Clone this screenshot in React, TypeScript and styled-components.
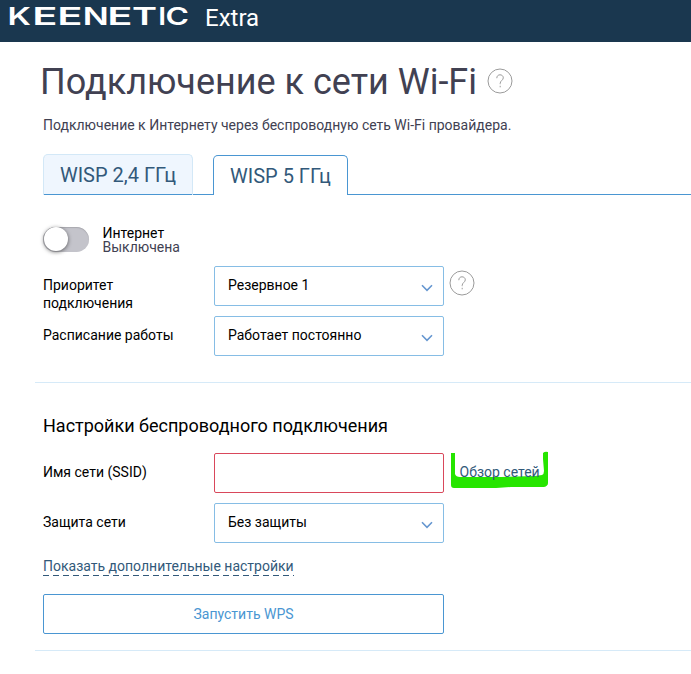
import React from "react";
import styled, { createGlobalStyle } from "styled-components";

const GlobalStyle = createGlobalStyle`
  * { box-sizing: border-box; }
  body { margin: 0; background: #fff; color: #000; overflow: hidden;
    font: 14px/18px Roboto, "Liberation Sans", sans-serif; }
`;

const Page = styled.div`
  width: 691px;
  height: 674px;
  overflow: hidden;
`;
const Header = styled.header`
  display: flex;
  align-items: flex-start;
  height: 42px;
  background: #1a374f;
  color: #fff;
`;
const Logo = styled.svg`
  display: block;
  width: 205px;
  height: 42px;
  flex: none;
  fill: #fff;
  font: 600 24.5px Inter, sans-serif;
`;
const Model = styled.span`
  font-size: 24px;
  line-height: 28px;
  padding-top: 4px;
`;
const Main = styled.main`
  padding-left: 35px;
`;
const TitleRow = styled.div`
  display: flex;
  align-items: center;
  gap: 10px;
  height: 50px;
  margin-top: 14px;
  padding-left: 5px;
`;
const Title = styled.h1`
  margin: 2px 0 0;
  font-size: 36px;
  line-height: 50px;
  font-weight: 400;
  color: #414152;
  white-space: nowrap;
`;
const HelpIcon = styled.svg`
  display: block;
  flex: none;
  width: 26px;
  height: 26px;
`;
const Lead = styled.p`
  margin: 10px 0 20px 8px;
  color: #414152;
`;
const Tabs = styled.nav`
  display: flex;
  align-items: flex-end;
  height: 41px;
  margin-left: 8px;
`;
const Tab = styled.div<{ $active?: boolean }>`
  display: flex;
  justify-content: center;
  width: ${(p) => (p.$active ? 135 : 150)}px;
  height: ${(p) => (p.$active ? 40 : 41)}px;
  padding-top: 8px;
  border: 1px solid ${(p) => (p.$active ? "#4a96d2" : "#d3e8f7")};
  border-bottom: 0;
  border-radius: 5px 5px 0 0;
  background: ${(p) => (p.$active ? "#fff" : "#eff6fe")};
  box-shadow: ${(p) => (p.$active ? "none" : "inset 0 -1px #4a96d2")};
  color: #32597a;
  font-size: 20px;
  line-height: 24px;
`;
const TabLine = styled.div<{ $width?: number }>`
  height: 1px;
  background: #4a96d2;
  ${(p) => (p.$width ? `width: ${p.$width}px;` : "flex: 1;")}
`;
const SwitchRow = styled.div`
  display: flex;
  align-items: center;
  gap: 13.5px;
  height: 30px;
  margin: 30px 0 11px 8px;
`;
const Track = styled.div`
  width: 46px;
  height: 25px;
  margin-top: -1px;
  border-radius: 13px;
  background: #c4c4cb;
  box-shadow: inset 0 1px 1px #aaaab0;
`;
const Knob = styled.div`
  width: 24px;
  height: 24px;
  margin-left: 0.5px;
  border-radius: 50%;
  background: #fff;
  box-shadow: 0 1px 4px rgba(0, 0, 0, 0.55);
`;
const SwitchText = styled.div`
  line-height: 14px;
`;
const Status = styled.div`
  color: #414152;
`;
const Row = styled.div`
  display: flex;
  height: 40px;
  margin: 0 0 10px 8px;
`;
const Label = styled.label`
  width: 171px;
  flex: none;
  padding-top: 10px;
`;
const Select = styled.div`
  display: flex;
  justify-content: space-between;
  width: 230px;
  height: 40px;
  padding: 9px 10.5px 0 13px;
  border: 1px solid #86bde5;
  border-radius: 2px;
`;
const Chevron = styled.svg`
  width: 12px;
  height: 8px;
  margin-top: 7.5px;
`;
const Input = styled.input`
  width: 230px;
  height: 40px;
  border: 1px solid #d9485b;
  border-radius: 2px;
  outline: none;
  background: #fff;
`;
const HelpSlot = styled.div`
  padding: 4px 0 0 5px;
`;
const Section = styled.section`
  margin-top: 26px;
  border: solid #d6eaf8;
  border-width: 1px 0;
  padding-bottom: 16px;
`;
const SectionTitle = styled.h2`
  margin: 31px 0 15px 8px;
  font-size: 18px;
  line-height: 24px;
  font-weight: 400;
`;
const Scan = styled.a`
  position: relative;
  width: 98px;
  height: 38px;
  margin-left: 7px;
  padding: 10px 0 0 8.5px;
  color: #32597a;
  white-space: nowrap;
`;
const Marker = styled.svg`
  position: absolute;
  left: 0;
  top: 0;
  width: 98px;
  height: 38px;
  overflow: visible;
  z-index: -1;
`;
const More = styled.a`
  display: block;
  width: 251px;
  height: 19px;
  margin: 14px 0 18px 8px;
  color: #32597a;
  white-space: nowrap;
  background: repeating-linear-gradient(90deg, #32597a 0 6px, transparent 6px 10px) 0 100% / 100% 1px no-repeat;
`;
const WpsButton = styled.button`
  display: block;
  width: 401px;
  height: 40px;
  margin-left: 8px;
  padding: 0;
  border: 1px solid #4a96d2;
  border-radius: 2px;
  background: #fff;
  color: #4a96d2;
  font: inherit;
`;

/* Extended wordmark: each letter has its own offset and horizontal stretch. */
const wordmark: [string, number, number][] = [
  ["K", 7.6, 1.36],
  ["E", 32.2, 1.7],
  ["E", 57.2, 1.7],
  ["N", 82.8, 1.4],
  ["E", 107.2, 1.7],
  ["T", 131.9, 1.55],
  ["I", 158.3, 1.15],
  ["C", 165.4, 1.3],
];

const Help = () => (
  <HelpIcon viewBox="0 0 26 26" fill="none" stroke="#9b9b9b">
    <circle cx="13" cy="13" r="12" />
    <path d="M9.8 10.2C9.8 8 11.2 6.8 13 6.8s3.3 1.2 3.3 3c0 2.4-3.1 2.8-3.1 5.6v.8M13.2 17.8v1.5" />
  </HelpIcon>
);

const SelectBox = ({ value }: { value: string }) => (
  <Select>
    <span>{value}</span>
    <Chevron viewBox="0 0 12 8" fill="none" stroke="#6596d0" strokeWidth="1.6">
      <path d="M1 1.3 6 6.3 11 1.3" />
    </Chevron>
  </Select>
);

export default function App() {
  return (
    <Page>
      <GlobalStyle />
      <Header>
        <Logo viewBox="0 0 205 42">
          {wordmark.map(([letter, x, stretch], i) => (
            <text key={i} transform={`translate(${x} 25) scale(${stretch} 1)`}>
              {letter}
            </text>
          ))}
        </Logo>
        <Model>Extra</Model>
      </Header>
      <Main>
        <TitleRow>
          <Title>Подключение к сети Wi-Fi</Title>
          <Help />
        </TitleRow>
        <Lead>Подключение к Интернету через беспроводную сеть Wi-Fi провайдера.</Lead>
        <Tabs>
          <Tab>WISP 2,4 ГГц</Tab>
          <TabLine $width={20} />
          <Tab $active>WISP 5 ГГц</Tab>
          <TabLine />
        </Tabs>
        <SwitchRow>
          <Track><Knob /></Track>
          <SwitchText>
            Интернет
            <Status>Выключена</Status>
          </SwitchText>
        </SwitchRow>
        <Row>
          <Label>Приоритет<br />подключения</Label>
          <SelectBox value="Резервное 1" />
          <HelpSlot><Help /></HelpSlot>
        </Row>
        <Row>
          <Label>Расписание работы</Label>
          <SelectBox value="Работает постоянно" />
        </Row>
        <Section>
          <SectionTitle>Настройки беспроводного подключения</SectionTitle>
          <Row>
            <Label>Имя сети (SSID)</Label>
            <Input />
            <Scan>
              <Marker viewBox="0 0 98 38">
                <path
                  fill="#26e500"
                  d="M0 0H4V21Q5 24 9 24L50 24 84 23 91 22Q93 21 93 18L92 6V0Q94 -2 97 -1V30Q97 33 93 34L60 34 45 35H3Q0 35 0 32Z"
                />
              </Marker>
              Обзор сетей
            </Scan>
          </Row>
          <Row>
            <Label>Защита сети</Label>
            <SelectBox value="Без защиты" />
          </Row>
          <More>Показать дополнительные настройки</More>
          <WpsButton>Запустить WPS</WpsButton>
        </Section>
      </Main>
    </Page>
  );
}
